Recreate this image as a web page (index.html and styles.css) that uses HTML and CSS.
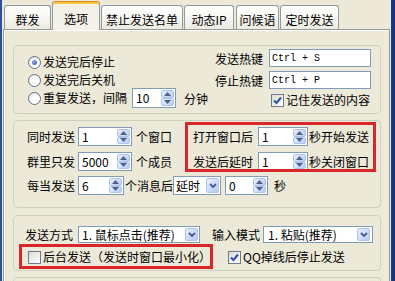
FILE: index.html
```html
<!DOCTYPE html>
<html>
<head>
<meta charset="utf-8">
<link rel="stylesheet" href="styles.css">
</head>
<body>
<div class="frame">
  <div class="edge-l"></div>
  <div class="main">
    <div class="tabs">
      <div class="tab t1">群发</div>
      <div class="tab t2 sel">选项</div>
      <div class="tab t3">禁止发送名单</div>
      <div class="tab t4">动态IP</div>
      <div class="tab t5">问候语</div>
      <div class="tab t6">定时发送</div>
    </div>
    <div class="panel">
      <div class="group g1">
        <div class="col-radios">
          <div class="row r18"><span class="radio on"></span><span class="txt">发送完后停止</span></div>
          <div class="row r18"><span class="radio"></span><span class="txt">发送完后关机</span></div>
          <div class="row r18">
            <span class="radio"></span><span class="txt">重复发送，间隔</span>
            <span class="field spin f-int"><span class="val">10</span><span class="sbs"><span class="sb"><svg width="7" height="4" viewBox="0 0 7 4"><polygon points="0,4 3.5,0 7,4" fill="#4D6185"/></svg></span><span class="sb"><svg width="7" height="4" viewBox="0 0 7 4"><polygon points="0,0 3.5,4 7,0" fill="#4D6185"/></svg></span></span></span>
            <span class="unit-min">分钟</span>
          </div>
        </div>
        <div class="col-hot">
          <div class="hrow"><span class="lbl4">发送热键</span><span class="field hot">Ctrl + S</span></div>
          <div class="hrow"><span class="lbl4">停止热键</span><span class="field hot">Ctrl + P</span></div>
          <div class="hrow chkrow"><span class="check on"><svg width="11" height="11" viewBox="0 0 11 11"><path d="M2 5.5 L4.5 8 L9 2.5" fill="none" stroke="#2A4FAE" stroke-width="2"/></svg></span><span class="txt">记住发送的内容</span></div>
        </div>
      </div>

      <div class="group g2">
        <div class="g2-top">
          <div class="g2-left">
            <div class="row r19">
              <span class="lbl4">同时发送</span>
              <span class="field spin f-a"><span class="val">1</span><span class="sbs"><span class="sb"><svg width="7" height="4" viewBox="0 0 7 4"><polygon points="0,4 3.5,0 7,4" fill="#4D6185"/></svg></span><span class="sb"><svg width="7" height="4" viewBox="0 0 7 4"><polygon points="0,0 3.5,4 7,0" fill="#4D6185"/></svg></span></span></span>
              <span class="unit">个窗口</span>
            </div>
            <div class="row r19 gap6">
              <span class="lbl4">群里只发</span>
              <span class="field spin f-a"><span class="val">5000</span><span class="sbs"><span class="sb"><svg width="7" height="4" viewBox="0 0 7 4"><polygon points="0,4 3.5,0 7,4" fill="#4D6185"/></svg></span><span class="sb"><svg width="7" height="4" viewBox="0 0 7 4"><polygon points="0,0 3.5,4 7,0" fill="#4D6185"/></svg></span></span></span>
              <span class="unit">个成员</span>
            </div>
          </div>
          <div class="g2-right">
            <div class="row r19">
              <span class="lbl5">打开窗口后</span>
              <span class="field spin f-b"><span class="val">1</span><span class="sbs"><span class="sb"><svg width="7" height="4" viewBox="0 0 7 4"><polygon points="0,4 3.5,0 7,4" fill="#4D6185"/></svg></span><span class="sb"><svg width="7" height="4" viewBox="0 0 7 4"><polygon points="0,0 3.5,4 7,0" fill="#4D6185"/></svg></span></span></span>
              <span class="unit-s">秒开始发送</span>
            </div>
            <div class="row r19 gap6">
              <span class="lbl5">发送后延时</span>
              <span class="field spin f-b"><span class="val">1</span><span class="sbs"><span class="sb"><svg width="7" height="4" viewBox="0 0 7 4"><polygon points="0,4 3.5,0 7,4" fill="#4D6185"/></svg></span><span class="sb"><svg width="7" height="4" viewBox="0 0 7 4"><polygon points="0,0 3.5,4 7,0" fill="#4D6185"/></svg></span></span></span>
              <span class="unit-s">秒关闭窗口</span>
            </div>
          </div>
        </div>
        <div class="row r19 rowc">
          <span class="lbl4">每当发送</span>
          <span class="field spin f-c"><span class="val">6</span><span class="sbs"><span class="sb"><svg width="7" height="4" viewBox="0 0 7 4"><polygon points="0,4 3.5,0 7,4" fill="#4D6185"/></svg></span><span class="sb"><svg width="7" height="4" viewBox="0 0 7 4"><polygon points="0,0 3.5,4 7,0" fill="#4D6185"/></svg></span></span></span>
          <span class="unit-c">个消息后</span>
          <span class="field combo f-delay"><span class="val">延时</span><span class="cb"><svg width="8" height="5" viewBox="0 0 8 5"><polyline points="1,1 4,4 7,1" fill="none" stroke="#3E5A9A" stroke-width="1.8"/></svg></span></span>
          <span class="field spin f-d"><span class="val">0</span><span class="sbs"><span class="sb"><svg width="7" height="4" viewBox="0 0 7 4"><polygon points="0,4 3.5,0 7,4" fill="#4D6185"/></svg></span><span class="sb"><svg width="7" height="4" viewBox="0 0 7 4"><polygon points="0,0 3.5,4 7,0" fill="#4D6185"/></svg></span></span></span>
          <span class="unit-sec">秒</span>
        </div>
      </div>

      <div class="group g3">
        <div class="row r17">
          <span class="lbl4">发送方式</span>
          <span class="field combo f-mode"><span class="val">1. 鼠标点击(推荐)</span><span class="cb"><svg width="8" height="5" viewBox="0 0 8 5"><polyline points="1,1 4,4 7,1" fill="none" stroke="#3E5A9A" stroke-width="1.8"/></svg></span></span>
          <span class="lbl4 lbl-input">输入模式</span>
          <span class="field combo f-input"><span class="val">1. 粘贴(推荐)</span><span class="cb"><svg width="8" height="5" viewBox="0 0 8 5"><polyline points="1,1 4,4 7,1" fill="none" stroke="#3E5A9A" stroke-width="1.8"/></svg></span></span>
        </div>
        <div class="row r18 chkline">
          <span class="chkitem first"><span class="check"></span><span class="txt">后台发送（发送时窗口最小化）</span></span>
          <span class="chkitem"><span class="check on"><svg width="11" height="11" viewBox="0 0 11 11"><path d="M2 5.5 L4.5 8 L9 2.5" fill="none" stroke="#2A4FAE" stroke-width="2"/></svg></span><span class="txt">QQ掉线后停止发送</span></span>
        </div>
      </div>

      <div class="group g4"></div>
    </div>
  </div>
  <div class="edge-r"></div>
</div>
<div class="mark m1"></div>
<div class="mark m2"></div>
</body>
</html>
```

FILE: styles.css
```css
* { box-sizing: border-box; }
body {
  margin: 0;
  width: 395px;
  height: 281px;
  overflow: hidden;
  background: #ECE9D8;
  font-family: "Noto Sans CJK SC", sans-serif;
  font-size: 12px;
  color: #000;
  position: relative;
}
.frame { display: flex; height: 281px; overflow: hidden; }
.edge-l { width: 2px; background: #2D4F9E; }
.edge-r { width: 4px; background: linear-gradient(90deg, #1C3D8E, #143177); }
.main { width: 389px; height: 281px; overflow: hidden; }

.tabs {
  display: flex;
  align-items: flex-end;
  height: 29px;
  padding-left: 2px;
}
.tab {
  height: 24px;
  border: 1px solid #919B9C;
  border-bottom: none;
  border-radius: 3px 3px 0 0;
  background: linear-gradient(#FFFFFF, #F6F5F1 55%, #ECEAE1);
  display: flex;
  align-items: center;
  justify-content: center;
  padding-top: 4px;
  line-height: 14px;
  margin-right: 1px;
  white-space: nowrap;
}
.t1 { width: 47px; }
.t2 { width: 48px; }
.t3 { width: 82px; }
.t4 { width: 50px; margin-right: 2px; }
.t5 { width: 43px; }
.t6 { width: 59px; }
.tab.sel {
  height: 29px;
  margin-bottom: -1px;
  position: relative;
  z-index: 1;
  background: #F3F1E8;
  border-top: 1px solid #E68B2C;
  box-shadow: inset 0 2px 0 #FFC73C;
  padding-top: 5px;
}

.panel {
  margin-left: 1px;
  width: 387px;
  height: 252px;
  border: 1px solid #919B9C;
  border-bottom: none;
  box-shadow: inset 1px 1px 0 #FFFFFF;
  padding: 15px 8px 0 9px;
  overflow: hidden;
}

.group {
  border: 1px solid #D0D0BF;
  border-radius: 4px;
  width: 368px;
}
.g1 { height: 69px; margin-bottom: 6px; display: flex; padding: 0 9px 0 14px; }
.g2 { height: 88px; margin-bottom: 7px; padding: 6px 0 0 13px; }
.g3 { height: 56px; margin-bottom: 6px; padding: 10px 0 0 11px; }
.g4 { height: 4px; border-bottom: none; border-radius: 4px 4px 0 0; }

.row { display: flex; align-items: center; white-space: nowrap; }
.r17 { height: 17px; }
.r18 { height: 18px; }
.r19 { height: 19px; }
.gap6 { margin-top: 6px; }
.txt { margin-left: 2px; line-height: 14px; }

.col-radios { padding-top: 7px; width: 187px; }
.radio {
  width: 13px; height: 13px;
  border: 1px solid #5F7490;
  border-radius: 50%;
  background: radial-gradient(circle at 60% 60%, #FFFFFF 30%, #E3E1D8 100%);
  display: inline-flex;
  align-items: center;
  justify-content: center;
  flex: none;
}
.radio.on::after {
  content: "";
  width: 5px; height: 5px;
  border-radius: 50%;
  background: radial-gradient(circle at 35% 35%, #8FA4E0, #3454B4);
}
.unit-min { margin-left: 8px; }

.col-hot { width: 156px; padding-top: 3px; }
.hrow { display: flex; align-items: center; height: 18px; margin-bottom: 4px; }
.lbl4 { width: 48px; flex: none; }
.lbl5 { width: 60px; flex: none; }
.col-hot .lbl4 { margin-right: 6px; }
.field {
  display: flex;
  align-items: center;
  background: #FFFFFF;
  border: 1px solid #7F9DB9;
  height: 100%;
  flex: none;
  padding-left: 3px;
}
.hot {
  width: 102px;
  font-family: "Liberation Mono", monospace;
  font-size: 10px;
  padding-left: 2px;
}
.chkrow { margin-top: -2px; margin-bottom: 0; padding-left: 56px; }
.check {
  width: 13px; height: 13px;
  border: 1px solid #6A7C93;
  background: linear-gradient(135deg, #DCDCD4, #FFFFFF);
  display: inline-flex;
  align-items: center;
  justify-content: center;
  flex: none;
}

.val { line-height: 14px; }
.spin .sbs {
  margin-left: auto;
  margin-right: 1px;
  width: 13px;
  height: 100%;
  display: flex;
  flex-direction: column;
  padding: 1px 0;
}
.sb {
  flex: 1;
  display: flex;
  align-items: center;
  justify-content: center;
  background: linear-gradient(135deg, #E8EFFD, #B8CAF4);
  border: 1px solid #AFC3EF;
  border-radius: 2px;
}
.f-int { width: 44px; height: 20px; margin-left: 5px; }
.f-a { width: 54px; margin-left: 3px; }
.f-b { width: 50px; margin-left: 5px; }
.f-c { width: 46px; margin-left: 3px; }
.f-d { width: 43px; margin-left: 4px; }
.unit { margin-left: 4px; }
.unit-s { margin-left: 1px; }
.unit-c { margin-left: 1px; width: 48px; }
.unit-sec { margin-left: 6px; }

.g2-top { display: flex; }
.g2-right { margin-left: 21px; }
.rowc { margin-top: 5px; }

.combo .cb {
  margin-left: auto;
  margin-right: 1px;
  width: 13px;
  height: calc(100% - 2px);
  display: flex;
  align-items: center;
  justify-content: center;
  background: linear-gradient(135deg, #E8EFFD, #B8CAF4);
  border: 1px solid #AFC3EF;
  border-radius: 2px;
}
.f-delay { width: 48px; padding-left: 2px; }
.f-mode { width: 122px; margin-left: 5px; }
.f-input { width: 110px; margin-left: 3px; padding-left: 4px; }
.f-input .cb { margin-right: 2px; }
.lbl-input { margin-left: 12px; }

.chkline { margin-top: 5px; }
.chkitem { display: flex; align-items: center; }
.chkitem.first { width: 200px; margin-left: 3px; }

.mark {
  position: absolute;
  border: 3px solid #D8262B;
  pointer-events: none;
}
.m1 { left: 185px; top: 122px; width: 191px; height: 50px; }
.m2 { left: 19px; top: 244px; width: 194px; height: 25px; }
```
